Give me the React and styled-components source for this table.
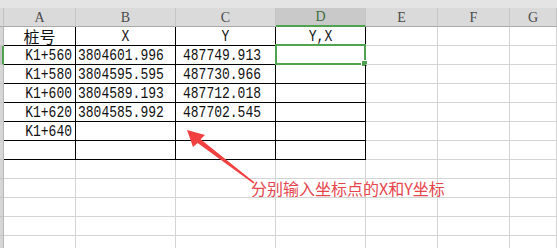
import React from "react";
import styled, { createGlobalStyle, css } from "styled-components";

const GlobalStyle = createGlobalStyle`
  html, body {
    margin: 0;
    padding: 0;
    background: #ffffff;
    overflow: hidden;
  }
`;

const GREEN = "#4fa34f";
const GRID = "#d4d4d4";

const Sheet = styled.div`
  position: relative;
  width: 557px;
  height: 248px;
  overflow: hidden;
  background: #ffffff;
  font-family: "Liberation Mono", "Noto Sans CJK SC", monospace;
`;

const TopStrip = styled.div`
  height: 8px;
  background: #e4e4e4;
`;

const Grid = styled.div`
  display: grid;
  grid-template-columns: 4px 72px 100px 100px 90px 72px 72px 1fr;
  grid-auto-rows: 19px;
`;

const Corner = styled.div`
  box-sizing: border-box;
  background: #d9d9d9;
  border-right: 1px solid #c2c2c2;
  border-bottom: 1px solid #a9a9a9;
`;

const ColHead = styled.div`
  box-sizing: border-box;
  display: flex;
  align-items: center;
  justify-content: center;
  background: ${(p) => (p.$active ? "#c9c9c9" : "#dadada")};
  border-right: 1px solid #c6c6c6;
  border-bottom: ${(p) => (p.$active ? `2px solid ${GREEN}` : "1px solid #a9a9a9")};
  color: ${(p) => (p.$active ? "#3f6e3f" : "#4a4a4a")};
  font-family: "Liberation Serif", serif;
  font-size: 14px;
  padding-top: 1px;
`;

const RowHead = styled.div`
  box-sizing: border-box;
  background: ${(p) => (p.$active ? "#c4c4c4" : "#d6d6d6")};
  border-right: ${(p) => (p.$active ? `2px solid ${GREEN}` : "1px solid #b8b8b8")};
  border-bottom: 1px solid #c4c4c4;
`;

const Cell = styled.div`
  position: relative;
  box-sizing: border-box;
  display: flex;
  align-items: center;
  overflow: visible;
  white-space: nowrap;
  border-right: 1px solid ${(p) => (p.$ruled ? "#000000" : GRID)};
  border-bottom: 1px solid ${(p) => (p.$ruled ? "#000000" : GRID)};
  color: #111111;
  font-size: 13px;
  ${(p) =>
    p.$align === "right" &&
    css`
      justify-content: flex-end;
      padding-right: 3px;
    `}
  ${(p) =>
    p.$align === "left" &&
    css`
      justify-content: flex-start;
      padding-left: ${p.$indent || 2}px;
    `}
  ${(p) =>
    p.$align === "center" &&
    css`
      justify-content: center;
    `}
`;

const Value = styled.span`
  display: inline-block;
  line-height: 1;
  transform: scaleY(1.2);
  transform-origin: center;
`;

const Title = styled.span`
  font-family: "Noto Sans CJK SC", sans-serif;
  font-size: 16px;
  line-height: 1;
  color: #111111;
`;

/* active cell outline with its fill handle */
const Selection = styled.div`
  position: absolute;
  left: -1px;
  top: -2px;
  right: -1px;
  bottom: -1px;
  border: 2px solid ${GREEN};
  pointer-events: none;

  &::after {
    content: "";
    position: absolute;
    right: -4px;
    bottom: -4px;
    width: 5px;
    height: 5px;
    background: ${GREEN};
    border: 1px solid #ffffff;
  }
`;

const Note = styled.div`
  position: absolute;
  left: 251px;
  top: 180px;
  font-family: "Noto Sans CJK SC", sans-serif;
  font-size: 16px;
  line-height: 1;
  color: #e5464d;
  white-space: nowrap;
`;

const Overlay = styled.svg`
  position: absolute;
  left: 0;
  top: 0;
  pointer-events: none;
`;

const columns = [
  { key: "A", align: "right" },
  { key: "B", align: "left", indent: 2 },
  { key: "C", align: "left", indent: 7 },
  { key: "D", align: "center" },
  { key: "E", align: "center" },
  { key: "F", align: "center" },
  { key: "G", align: "center" },
];

const table = [
  ["桩号", "X", "Y", "Y,X"],
  ["K1+560", "3804601.996", "487749.913", ""],
  ["K1+580", "3804595.595", "487730.966", ""],
  ["K1+600", "3804589.193", "487712.018", ""],
  ["K1+620", "3804585.992", "487702.545", ""],
  ["K1+640", "", "", ""],
  ["", "", "", ""],
];

const TOTAL_ROWS = 12;
const ACTIVE = { row: 1, col: 3 };

export default function App() {
  const rows = Array.from({ length: TOTAL_ROWS }, (_, r) => table[r] || []);

  return (
    <>
      <GlobalStyle />
      <Sheet>
        <TopStrip />
        <Grid>
          <Corner />
          {columns.map((c, i) => (
            <ColHead key={c.key} $active={i === ACTIVE.col}>
              {c.key}
            </ColHead>
          ))}
          {rows.map((row, r) => (
            <React.Fragment key={r}>
              <RowHead $active={r === ACTIVE.row} />
              {columns.map((c, ci) => {
                const ruled = r < table.length && ci < 4;
                const text = row[ci] || "";
                const isHeader = r === 0;
                const align = isHeader ? "center" : c.align;
                return (
                  <Cell
                    key={c.key}
                    $ruled={ruled}
                    $align={align}
                    $indent={c.indent}
                  >
                    {text &&
                      (text === "桩号" ? (
                        <Title>{text}</Title>
                      ) : (
                        <Value>{text}</Value>
                      ))}
                    {r === ACTIVE.row && ci === ACTIVE.col && <Selection />}
                  </Cell>
                );
              })}
            </React.Fragment>
          ))}
        </Grid>

        <Overlay width="557" height="248" viewBox="0 0 557 248">
          <polygon
            points="187,130 205,135 200.6,139.2 254.6,182.4 253.4,183.6 197.6,143 193,147"
            fill="#f0403f"
          />
        </Overlay>
        <Note>分别输入坐标点的X和Y坐标</Note>
      </Sheet>
    </>
  );
}
